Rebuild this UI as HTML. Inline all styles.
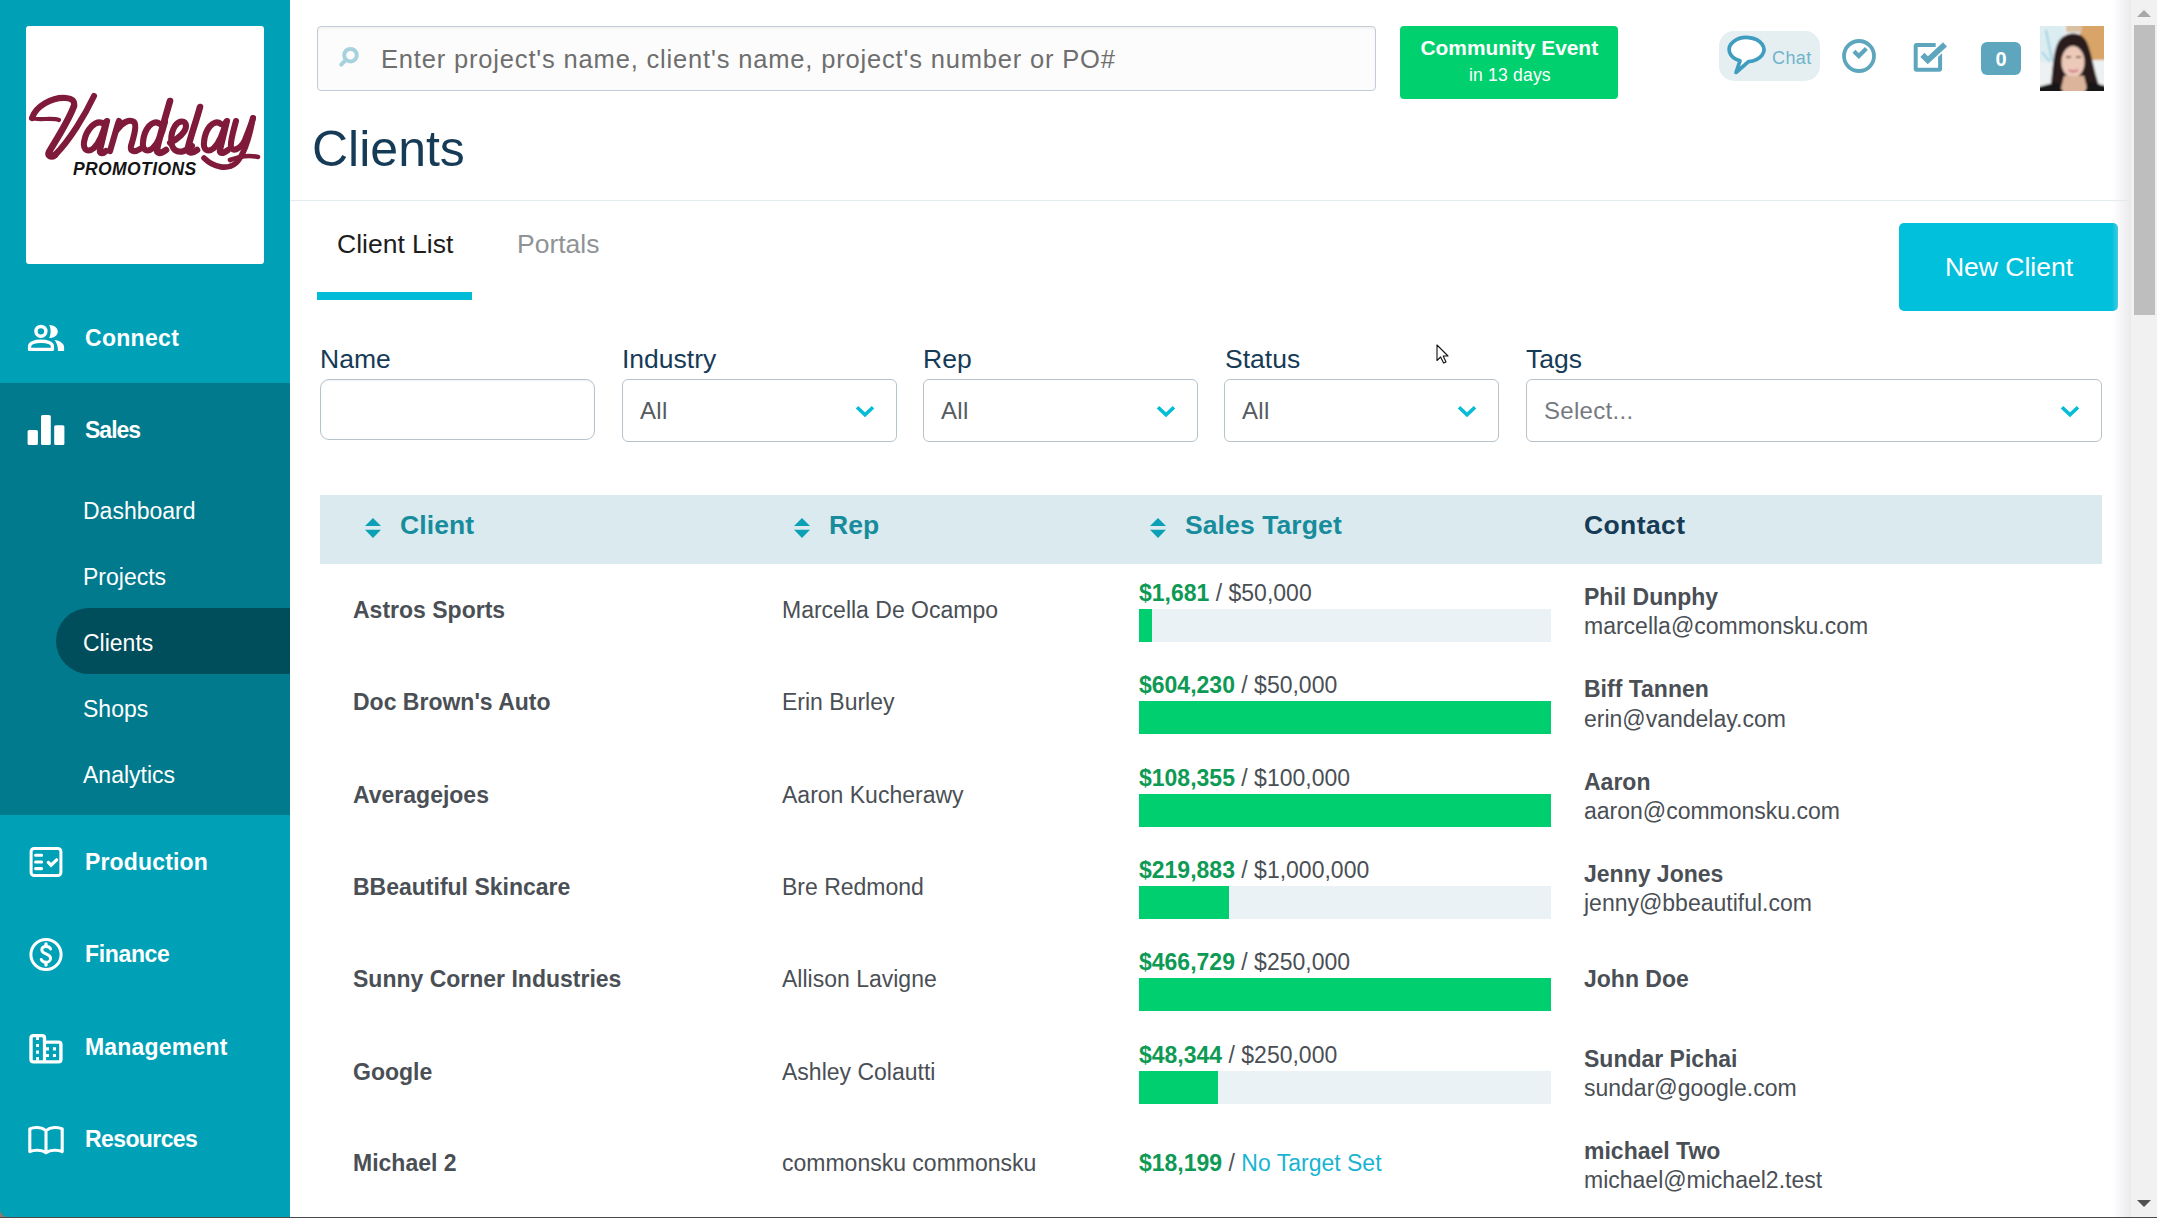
<!DOCTYPE html>
<html><head><meta charset="utf-8"><style>
*{box-sizing:border-box;margin:0;padding:0}
html,body{width:2157px;height:1218px;overflow:hidden;background:#fff;font-family:"Liberation Sans",sans-serif}
div,span,b{white-space:nowrap}
.a{position:absolute}
#sb{position:absolute;left:0;top:0;width:290px;height:1217px;background:#00a1b7;border-bottom-left-radius:8px;overflow:hidden}
#logo{position:absolute;left:26px;top:26px;width:238px;height:238px;background:#fff;border-radius:3px}
.nav{position:absolute;left:85px;color:#fff;font-weight:bold;font-size:23px;line-height:1;letter-spacing:0.15px}
.sub{position:absolute;left:83px;color:#fff;font-size:23px;line-height:1}
#salesbg{position:absolute;left:0;top:383px;width:290px;height:432px;background:#007a8c}
#pill{position:absolute;left:56px;top:608px;width:234px;height:66px;background:#004d5b;border-radius:33px 0 0 33px}
#search{position:absolute;left:317px;top:26px;width:1059px;height:65px;border:1px solid #c3ccd6;border-radius:4px;background:#fcfcfc;box-shadow:inset 0 2px 3px rgba(0,0,0,0.045)}
#ph{position:absolute;left:381px;top:47px;font-size:25.5px;color:#6e6e6e;letter-spacing:0.83px;line-height:1}
#event{position:absolute;left:1400px;top:26px;width:218px;height:73px;background:#00d16e;border-radius:4px;color:#fff}
#title{position:absolute;left:312px;top:124px;font-size:50px;color:#163b57;line-height:1}
#hline{position:absolute;left:290px;top:200px;width:1842px;height:1px;background:#e3ebee}
.tab{position:absolute;top:231px;font-size:26.5px;line-height:1}
#uline{position:absolute;left:317px;top:292px;width:155px;height:8px;background:#00bcd8}
#newc{position:absolute;left:1899px;top:223px;width:219px;height:88px;background:#01c0dc;border-radius:5px;color:#fff;font-size:26.5px;text-align:center;line-height:88px;padding-left:1px}
.lbl{position:absolute;top:345.5px;font-size:26.5px;color:#163b57;line-height:1}
.sel{position:absolute;top:379px;height:63px;border:1px solid #b7c3ca;border-radius:6px;background:#fff}
.selt{position:absolute;left:17px;top:18.5px;font-size:24px;color:#555b60;line-height:1;letter-spacing:0.3px}
.chev{position:absolute;top:26px}
#thead{position:absolute;left:320px;top:495px;width:1782px;height:69px;background:#dbeaee}
.th{position:absolute;top:512.3px;font-size:26.5px;font-weight:bold;color:#178c9c;line-height:1;letter-spacing:0.1px}
.cn{position:absolute;left:353px;font-size:23px;font-weight:bold;color:#4a4f55;line-height:1}
.rp{position:absolute;left:782px;font-size:23px;color:#4a4f55;line-height:1}
.st{position:absolute;left:1139px;font-size:23px;color:#4a4f55;line-height:1}
.st b{color:#0e9a55}
.bar{position:absolute;left:1139px;width:412px;height:33px;background:#eaf2f5}
.bar i{position:absolute;left:0;top:0;height:33px;background:#00cf6f}
.ct{position:absolute;left:1584px;font-size:23px;color:#4a4f55;line-height:1}
#scroll{position:absolute;left:2131px;top:0;width:26px;height:1217px;background:#f1f1f1}
#shade{position:absolute;left:2112px;top:0;width:19px;height:1217px;background:linear-gradient(to right,rgba(240,240,242,0),rgba(232,232,236,0.9))}
#thumb{position:absolute;left:2134px;top:25px;width:21px;height:290px;background:#bebebe}
#botline{position:absolute;left:0;top:1217px;width:2157px;height:1px;background:#4a4a4a}
</style></head><body>
<div class="a" style="left:0;top:1200px;width:20px;height:18px;background:#857b72"></div>
<div id="sb"><div id="salesbg"></div><div id="pill"></div><div id="logo"></div><svg class="a" style="left:0;top:0" width="290" height="290" viewBox="0 0 290 290"><path d="M32 118 C36 106 52 97 66 98 C72 98.5 75 101 74 106" fill="none" stroke="#7f1a3a" stroke-width="6.1" stroke-linecap="round" stroke-linejoin="round"/><path d="M32 118 C38 121 52 117 59 120" fill="none" stroke="#7f1a3a" stroke-width="4.1" stroke-linecap="round" stroke-linejoin="round"/><path d="M74 106 C68 122 56 140 49 152 C47 156 51 158 55 155" fill="none" stroke="#7f1a3a" stroke-width="6.6" stroke-linecap="round" stroke-linejoin="round"/><path d="M55 155 C70 140 85 115 94 96" fill="none" stroke="#7f1a3a" stroke-width="6.1" stroke-linecap="round" stroke-linejoin="round"/><path d="M104 124 C96 118 86 130 84 142 C83 150 88 153 94 148 C100 142 104 130 106 122" fill="none" stroke="#7f1a3a" stroke-width="6.1" stroke-linecap="round" stroke-linejoin="round"/><path d="M107 121 L100 150 C99 154 103 154 106 151" fill="none" stroke="#7f1a3a" stroke-width="6.1" stroke-linecap="round" stroke-linejoin="round"/><path d="M110 151 C114 138 117 126 119 121" fill="none" stroke="#7f1a3a" stroke-width="6.1" stroke-linecap="round" stroke-linejoin="round"/><path d="M117 130 C122 122 130 119 134 122 C137 125 134 136 131 146 C130 151 134 153 140 149" fill="none" stroke="#7f1a3a" stroke-width="6.1" stroke-linecap="round" stroke-linejoin="round"/><path d="M160 124 C152 118 144 130 143 142 C142 150 147 153 153 148 C159 142 163 130 165 122" fill="none" stroke="#7f1a3a" stroke-width="6.1" stroke-linecap="round" stroke-linejoin="round"/><path d="M170 101 C166 115 160 135 157 149 C156 154 161 154 166 150" fill="none" stroke="#7f1a3a" stroke-width="6.6" stroke-linecap="round" stroke-linejoin="round"/><path d="M170 143 C178 139 186 132 186 126 C186 120 179 120 175 126 C170 134 170 146 175 150 C180 154 188 150 192 146" fill="none" stroke="#7f1a3a" stroke-width="6.1" stroke-linecap="round" stroke-linejoin="round"/><path d="M200 107 C196 122 190 138 188 148 C187 153 192 154 197 150" fill="none" stroke="#7f1a3a" stroke-width="6.6" stroke-linecap="round" stroke-linejoin="round"/><path d="M221 124 C213 118 205 130 204 142 C203 150 208 153 214 148 C220 142 224 130 226 122" fill="none" stroke="#7f1a3a" stroke-width="6.1" stroke-linecap="round" stroke-linejoin="round"/><path d="M227 121 L220 150 C219 154 223 154 228 150" fill="none" stroke="#7f1a3a" stroke-width="6.1" stroke-linecap="round" stroke-linejoin="round"/><path d="M236 121 C233 132 230 142 231 147 C232 152 240 150 245 140 C249 130 252 122 253 118" fill="none" stroke="#7f1a3a" stroke-width="6.1" stroke-linecap="round" stroke-linejoin="round"/><path d="M253 118 C250 135 244 155 236 163 C228 170 214 168 204 158" fill="none" stroke="#7f1a3a" stroke-width="5.6" stroke-linecap="round" stroke-linejoin="round"/><path d="M230 160 C240 156 250 155 258 157" fill="none" stroke="#7f1a3a" stroke-width="4.6" stroke-linecap="round" stroke-linejoin="round"/><text x="73" y="175" font-family="Liberation Sans" font-weight="bold" font-style="italic" font-size="17.5" letter-spacing="0.4" fill="#141414">PROMOTIONS</text></svg><svg class="a" style="left:26px;top:322px;overflow:visible" width="40" height="32" viewBox="0 0 40 32"><circle cx="14.9" cy="9.35" r="4.95" fill="none" stroke="#fff" stroke-width="3.5"/><path d="M23.1 2.9 C28.5 2.9 31.8 6 31.8 9.45 C31.8 13 28.5 16 23.1 16 C24.3 14 24.6 11.5 24.6 9.45 C24.6 7.4 24.3 5 23.1 2.9 Z" fill="#fff"/><path d="M3.55 27.45 V24.5 C3.55 21 9 19.25 15 19.25 C21 19.25 26.45 21 26.45 24.5 V27.45 Z" fill="none" stroke="#fff" stroke-width="3.3" stroke-linejoin="round"/><path d="M28.3 18 C34 18.5 38.1 21.5 38.1 25 V29.1 H32 C32 24 30.5 20 28.3 18 Z" fill="#fff"/></svg><svg class="a" style="left:26px;top:413px;overflow:visible" width="40" height="33" viewBox="0 0 40 33"><rect x="1.6" y="17" width="10.3" height="15" rx="1.6" fill="#fff"/><rect x="15" y="2" width="9.8" height="30" rx="1.6" fill="#fff"/><rect x="28.2" y="12.2" width="10.2" height="19.8" rx="1.6" fill="#fff"/></svg><svg class="a" style="left:26px;top:844px;overflow:visible" width="40" height="36" viewBox="0 0 40 36"><rect x="5.1" y="4.5" width="29.8" height="27" rx="3" fill="none" stroke="#fff" stroke-width="3"/><path d="M9.6 11.3 H15.6 M9.6 18 H15.6 M9.6 24.6 H15.6" stroke="#fff" stroke-width="3.1" stroke-linecap="round"/><path d="M22.3 18.4 L25 21.2 L30.6 15.8" fill="none" stroke="#fff" stroke-width="3.2" stroke-linecap="round" stroke-linejoin="miter"/></svg><svg class="a" style="left:26px;top:935px;overflow:visible" width="40" height="40" viewBox="0 0 40 40"><circle cx="20" cy="19.5" r="15.1" fill="none" stroke="#fff" stroke-width="3"/><path d="M24.6 14 C24 12.2 22.2 11.5 20 11.5 C17.4 11.5 15.8 13 15.8 15 C15.8 19.6 24.6 18.2 24.6 23.2 C24.6 25.6 22.6 27.2 20 27.2 C17.8 27.2 16 26.4 15.2 24.4" fill="none" stroke="#fff" stroke-width="2.9" stroke-linecap="round"/><path d="M20 8.8 V11 M20 27.8 V30" stroke="#fff" stroke-width="3.3" stroke-linecap="round"/></svg><svg class="a" style="left:26px;top:1030px;overflow:visible" width="40" height="38" viewBox="0 0 40 38"><path d="M5 8 Q5 5.6 7.4 5.6 H16.1 Q18.5 5.6 18.5 8 V12.1 H32.5 Q34.9 12.1 34.9 14.5 V29.5 Q34.9 31.9 32.5 31.9 H7.4 Q5 31.9 5 29.5 Z" fill="none" stroke="#fff" stroke-width="3.4" stroke-linejoin="round"/><path d="M18.5 12 V31.9" stroke="#fff" stroke-width="3.2"/><path d="M10.1 7 H13 V10.1 H10.1Z M10.1 14 H13 V17 H10.1Z M10.1 20.5 H13 V23.8 H10.1Z M10.1 27 H13 V30.5 H10.1Z" fill="#fff"/><path d="M19.7 17.2 H23 V20.5 H19.7Z M19.7 24 H23 V27.1 H19.7Z M26.9 17.2 H30 V20.5 H26.9Z M26.9 24 H30 V27.1 H26.9Z" fill="#fff"/></svg><svg class="a" style="left:26px;top:1122px;overflow:visible" width="40" height="36" viewBox="0 0 40 36"><path d="M20 8.6 C15.5 4.8 8 4.8 3.8 6.9 V29.6 C8 27.6 15.5 27.6 20 30.6 C24.5 27.6 32 27.6 36.2 29.6 V6.9 C32 4.8 24.5 4.8 20 8.6 Z M20 8.6 V30" fill="none" stroke="#fff" stroke-width="3.1" stroke-linejoin="round"/></svg><div class="nav" style="top:327px;letter-spacing:0.3px">Connect</div><div class="nav" style="top:419px;letter-spacing:-1.0px">Sales</div><div class="nav" style="top:851px;letter-spacing:0.15px">Production</div><div class="nav" style="top:943px;letter-spacing:-0.35px">Finance</div><div class="nav" style="top:1036px;letter-spacing:0.2px">Management</div><div class="nav" style="top:1128px;letter-spacing:-0.6px">Resources</div><div class="sub" style="top:500px">Dashboard</div><div class="sub" style="top:566px">Projects</div><div class="sub" style="top:632px">Clients</div><div class="sub" style="top:698px">Shops</div><div class="sub" style="top:764px">Analytics</div></div>
<div id="search"></div>
<svg class="a" style="left:336px;top:44px;overflow:visible" width="26" height="26" viewBox="0 0 26 26"><circle cx="14.5" cy="11.2" r="6.3" fill="none" stroke="#a6d2de" stroke-width="4"/><path d="M9.8 16 L5.2 20.6" stroke="#a6d2de" stroke-width="4" stroke-linecap="round"/></svg>
<div id="ph">Enter project's name, client's name, project's number or PO#</div>
<div id="event"><div class="a" style="left:20.5px;top:11.5px;font-weight:bold;font-size:20.9px;line-height:1">Community Event</div><div class="a" style="left:69px;top:41px;font-size:17.5px;line-height:1;letter-spacing:0.2px">in 13 days</div></div>
<div class="a" style="left:1719px;top:31px;width:101px;height:50px;background:#e5eef1;border-radius:15px"></div>
<svg class="a" style="left:1724px;top:33px;overflow:visible" width="48" height="46" viewBox="0 0 48 46"><path d="M16 27.8 L12 39.5 L24.5 28.6 A17.4 12.1 0 1 0 16 27.8 Z" fill="#fff" stroke="#3f9ec0" stroke-width="3.7" stroke-linejoin="round"/></svg>
<div class="a" style="left:1772px;top:48.5px;font-size:18px;color:#6fb4cc;line-height:1;letter-spacing:0.4px">Chat</div>
<svg class="a" style="left:1838px;top:35px;overflow:visible" width="42" height="42" viewBox="0 0 42 42"><circle cx="21" cy="21" r="15" fill="none" stroke="#5ea6be" stroke-width="3.8"/><path d="M15.9 16.3 L20.8 21.1 L28.4 13.6" fill="none" stroke="#5ea6be" stroke-width="4.2"/></svg>
<svg class="a" style="left:1910px;top:38px;overflow:visible" width="42" height="38" viewBox="0 0 42 38"><path d="M25.7 7 H6.7 Q5.7 7 5.7 8 V30.7 Q5.7 31.7 6.7 31.7 H29.1 Q30.1 31.7 30.1 30.7 V15.2" fill="none" stroke="#5ea6be" stroke-width="4"/><path d="M12.4 16.9 L17.8 22.3 L35 6.4" fill="none" stroke="#fff" stroke-width="9"/><path d="M12.4 16.9 L17.8 22.3 L35 6.4" fill="none" stroke="#5ea6be" stroke-width="5.8"/></svg>
<div class="a" style="left:1981px;top:42px;width:40px;height:33px;background:#5ea6be;border-radius:6px;color:#fff;font-weight:bold;font-size:20px;text-align:center;line-height:35px;letter-spacing:0">0</div>
<svg class="a" style="left:2040px;top:26px;overflow:visible" width="64" height="65" viewBox="0 0 64 65"><defs><filter id="bl" x="-5%" y="-5%" width="110%" height="110%"><feGaussianBlur stdDeviation="0.9"/></filter><clipPath id="cp"><rect width="64" height="65"/></clipPath></defs><g clip-path="url(#cp)"><g filter="url(#bl)"><rect x="-2" y="-2" width="68" height="69" fill="#eef1f2"/><rect x="-2" y="-2" width="26" height="38" fill="#dcedf2"/><path d="M6 4 L12 34 M2 26 L10 36" stroke="#9fd0e0" stroke-width="2"/><rect x="40" y="-2" width="26" height="36" fill="#d9a468"/><rect x="26" y="-2" width="16" height="8" fill="#d8c0a0"/><path d="M10 67 C13 44 13 24 19 15 C25 6 39 5 45 13 C52 23 53 46 62 67 Z" fill="#2a1b1e"/><ellipse cx="33" cy="36" rx="11.5" ry="16" fill="#ecc9b8"/><path d="M24 50 L44 50 L48 67 L20 67 Z" fill="#dcb49c"/><path d="M-2 61 L17 56 L24 67 L-2 67Z M66 60 L50 56 L44 67 L66 67Z" fill="#121212"/><path d="M26 31 h5 M36 31 h5" stroke="#7a5a50" stroke-width="1.8"/><path d="M29 44 Q33 47 38 44" stroke="#d06a80" stroke-width="2" fill="none"/></g></g></svg>
<div id="title">Clients</div><div id="hline"></div>
<div class="tab" style="left:337px;color:#1d1d1d">Client List</div>
<div class="tab" style="left:517px;color:#8f9396">Portals</div>
<div id="uline"></div><div id="newc">New Client</div>
<div class="lbl" style="left:320px">Name</div>
<div class="lbl" style="left:622px">Industry</div>
<div class="lbl" style="left:923px">Rep</div>
<div class="lbl" style="left:1225px">Status</div>
<div class="lbl" style="left:1526px">Tags</div>
<div class="sel" style="left:320px;width:275px;height:61px;border-radius:9px;box-shadow:inset 0 1px 2px rgba(0,0,0,0.06)"></div>
<div class="sel" style="left:622px;width:275px"><div class="selt">All</div></div>
<svg class="a" style="left:855px;top:404px;overflow:visible" width="20" height="14" viewBox="0 0 20 14"><path d="M2 3.2 L10 10.8 L18 3.2" fill="none" stroke="#06bcd6" stroke-width="3.6"/></svg>
<div class="sel" style="left:923px;width:275px"><div class="selt">All</div></div>
<svg class="a" style="left:1156px;top:404px;overflow:visible" width="20" height="14" viewBox="0 0 20 14"><path d="M2 3.2 L10 10.8 L18 3.2" fill="none" stroke="#06bcd6" stroke-width="3.6"/></svg>
<div class="sel" style="left:1224px;width:275px"><div class="selt">All</div></div>
<svg class="a" style="left:1457px;top:404px;overflow:visible" width="20" height="14" viewBox="0 0 20 14"><path d="M2 3.2 L10 10.8 L18 3.2" fill="none" stroke="#06bcd6" stroke-width="3.6"/></svg>
<div class="sel" style="left:1526px;width:576px"><div class="selt" style="color:#767b80">Select...</div></div>
<svg class="a" style="left:2060px;top:404px;overflow:visible" width="20" height="14" viewBox="0 0 20 14"><path d="M2 3.2 L10 10.8 L18 3.2" fill="none" stroke="#06bcd6" stroke-width="3.6"/></svg>
<div id="thead"></div>
<svg class="a" style="left:365px;top:518px;overflow:visible" width="16" height="20" viewBox="0 0 16 20"><path d="M8 0 L16 8 H0Z M0 11.8 H16 L8 20Z" fill="#0ba0b5"/></svg>
<div class="th" style="left:400px">Client</div>
<svg class="a" style="left:794px;top:518px;overflow:visible" width="16" height="20" viewBox="0 0 16 20"><path d="M8 0 L16 8 H0Z M0 11.8 H16 L8 20Z" fill="#0ba0b5"/></svg>
<div class="th" style="left:829px">Rep</div>
<svg class="a" style="left:1150px;top:518px;overflow:visible" width="16" height="20" viewBox="0 0 16 20"><path d="M8 0 L16 8 H0Z M0 11.8 H16 L8 20Z" fill="#0ba0b5"/></svg>
<div class="th" style="left:1185px">Sales Target</div>
<div class="th" style="left:1584px;color:#163b57;letter-spacing:0.4px">Contact</div>
<div class="cn" style="top:599px">Astros Sports</div>
<div class="rp" style="top:599px">Marcella De Ocampo</div>
<div class="st" style="top:582px"><b>$1,681</b> / $50,000</div>
<div class="bar" style="top:609px"><i style="width:13px"></i></div>
<div class="ct" style="top:586px;font-weight:bold">Phil Dunphy</div>
<div class="ct" style="top:615.2px">marcella@commonsku.com</div>
<div class="cn" style="top:691.4px">Doc Brown&#39;s Auto</div>
<div class="rp" style="top:691.4px">Erin Burley</div>
<div class="st" style="top:674.4px"><b>$604,230</b> / $50,000</div>
<div class="bar" style="top:701px"><i style="width:412px"></i></div>
<div class="ct" style="top:678.4px;font-weight:bold">Biff Tannen</div>
<div class="ct" style="top:707.6px">erin@vandelay.com</div>
<div class="cn" style="top:783.8px">Averagejoes</div>
<div class="rp" style="top:783.8px">Aaron Kucherawy</div>
<div class="st" style="top:766.8px"><b>$108,355</b> / $100,000</div>
<div class="bar" style="top:794px"><i style="width:412px"></i></div>
<div class="ct" style="top:770.8px;font-weight:bold">Aaron</div>
<div class="ct" style="top:800.0px">aaron@commonsku.com</div>
<div class="cn" style="top:876.2px">BBeautiful Skincare</div>
<div class="rp" style="top:876.2px">Bre Redmond</div>
<div class="st" style="top:859.2px"><b>$219,883</b> / $1,000,000</div>
<div class="bar" style="top:886px"><i style="width:90px"></i></div>
<div class="ct" style="top:863.2px;font-weight:bold">Jenny Jones</div>
<div class="ct" style="top:892.4000000000001px">jenny@bbeautiful.com</div>
<div class="cn" style="top:968px">Sunny Corner Industries</div>
<div class="rp" style="top:968px">Allison Lavigne</div>
<div class="st" style="top:951px"><b>$466,729</b> / $250,000</div>
<div class="bar" style="top:978px"><i style="width:412px"></i></div>
<div class="ct" style="top:968px;font-weight:bold">John Doe</div>
<div class="cn" style="top:1061px">Google</div>
<div class="rp" style="top:1061px">Ashley Colautti</div>
<div class="st" style="top:1044px"><b>$48,344</b> / $250,000</div>
<div class="bar" style="top:1071px"><i style="width:79px"></i></div>
<div class="ct" style="top:1048px;font-weight:bold">Sundar Pichai</div>
<div class="ct" style="top:1077.2px">sundar@google.com</div>
<div class="cn" style="top:1152px">Michael 2</div>
<div class="rp" style="top:1152px">commonsku commonsku</div>
<div class="st" style="top:1152px"><b>$18,199</b> / <span style="color:#1ab4d2">No Target Set</span></div>
<div class="ct" style="top:1139.5px;font-weight:bold">michael Two</div>
<div class="ct" style="top:1168.7px">michael@michael2.test</div>
<svg class="a" style="left:1436px;top:344px;overflow:visible" width="14" height="20" viewBox="0 0 14 20"><path d="M1 1 V16.5 L4.6 13 L7.6 19 L10 18 L7.2 12 H12 Z" fill="#fff" stroke="#111" stroke-width="1.1" stroke-linejoin="round"/></svg>
<div id="shade"></div><div id="scroll"></div><div id="thumb"></div>
<svg class="a" style="left:2136px;top:8px;overflow:visible" width="16" height="10" viewBox="0 0 16 10"><path d="M1 9 L8 2 L15 9Z" fill="#a8a8a8"/></svg>
<svg class="a" style="left:2136px;top:1199px;overflow:visible" width="16" height="10" viewBox="0 0 16 10"><path d="M1 1 L8 8 L15 1Z" fill="#505050"/></svg>
<div id="botline"></div>
</body></html>
